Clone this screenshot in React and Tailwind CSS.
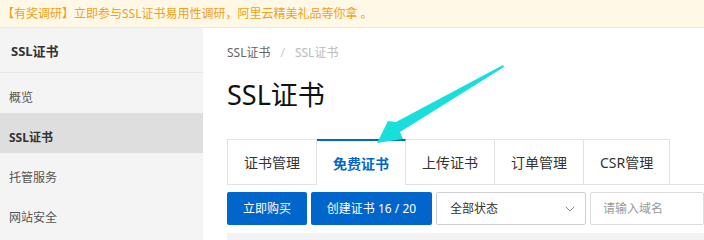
import React from 'react';
import { ChevronDown } from 'lucide-react';

const menu = ['概览', 'SSL证书', '托管服务', '网站安全'];
const tabs = ['证书管理', '免费证书', '上传证书', '订单管理', 'CSR管理'];

const App = () => {
  return (
    <div className="relative w-[704px] h-[240px] overflow-hidden bg-white font-['Noto_Sans','Noto_Sans_CJK_SC',sans-serif]">
      {/* survey banner */}
      <div className="h-[28px] bg-[#fff8e6] border-b border-[#fbe8c2] flex items-center pl-[2px] text-[12px] text-[#f0a020]">
        【有奖调研】立即参与SSL证书易用性调研，阿里云精美礼品等你拿 。
      </div>

      <div className="flex">
        {/* sidebar */}
        <div className="w-[203px] h-[212px] shrink-0 bg-[#f4f4f4]">
          <div className="h-[45px] border-b border-[#e6e6e6] flex items-center pl-[11px] pt-[4px] text-[13px] font-bold text-[#333]">
            SSL证书
          </div>
          {menu.map((item, i) => (
            <div
              key={item}
              className={
                i === 1
                  ? 'h-10 pl-[9px] pt-4 leading-[18px] text-[12px] font-bold text-[#333] bg-[#dedede]'
                  : 'h-10 pl-[9px] pt-4 leading-[18px] text-[12px] text-[#555]'
              }
            >
              {item}
            </div>
          ))}
        </div>

        {/* main */}
        <div className="flex-1 min-w-0 pl-6 pt-4">
          <div className="h-[18px] flex items-center text-[12px]">
            <span className="text-[#666]">SSL证书</span>
            <span className="mx-[10px] text-[#ccc]">/</span>
            <span className="text-[#bbb]">SSL证书</span>
          </div>
          <div className="mt-[15px] h-[36px] flex items-center text-[27px] text-[#111]">SSL证书</div>

          <div className="mt-[26px] flex border-b border-[#e2e2e2]">
            {tabs.map((tab, i) =>
              i === 1 ? (
                <div
                  key={tab}
                  className="h-[46px] -mb-px px-4 flex items-center bg-white border-t-2 border-t-[#0066cc] border-r border-r-[#e2e2e2] text-[14px] font-bold text-[#0066cc]"
                >
                  {tab}
                </div>
              ) : (
                <div
                  key={tab}
                  className={
                    i === 0
                      ? 'h-[45px] px-4 flex items-center border-t border-l border-r border-[#e2e2e2] text-[14px] text-[#333]'
                      : 'h-[45px] px-4 flex items-center border-t border-r border-[#e2e2e2] text-[14px] text-[#333]'
                  }
                >
                  {tab}
                </div>
              )
            )}
          </div>

          <div className="mt-[7px] flex gap-1 h-[33px]">
            <button className="w-[80px] rounded-[2px] bg-[#0066cc] text-white text-[12px]">立即购买</button>
            <button className="w-[121px] rounded-[2px] bg-[#0066cc] text-white text-[12px]">创建证书 16 / 20</button>
            <div className="w-[150px] border border-[#cfcfcf] rounded-[2px] flex items-center justify-between pl-[13px] pr-[7px] text-[12px] text-[#333]">
              <span>全部状态</span>
              <ChevronDown size={16} strokeWidth={1.5} color="#888" />
            </div>
            <div className="flex-1 min-w-0 border border-[#dcdcdc] rounded-[2px] flex items-center pl-3 text-[12px] text-[#999]">
              请输入域名
            </div>
          </div>

          <div className="mt-2 h-[10px] bg-[#f2f2f2]" />
        </div>
      </div>

      {/* annotation arrow */}
      <svg className="absolute inset-0 pointer-events-none" width="704" height="240" viewBox="0 0 704 240">
        <polygon
          points="503,65 396,122 388,121 377,143 403,139 400,132 504,67"
          fill="#19dfdc"
        />
      </svg>
    </div>
  );
};

export default App;
